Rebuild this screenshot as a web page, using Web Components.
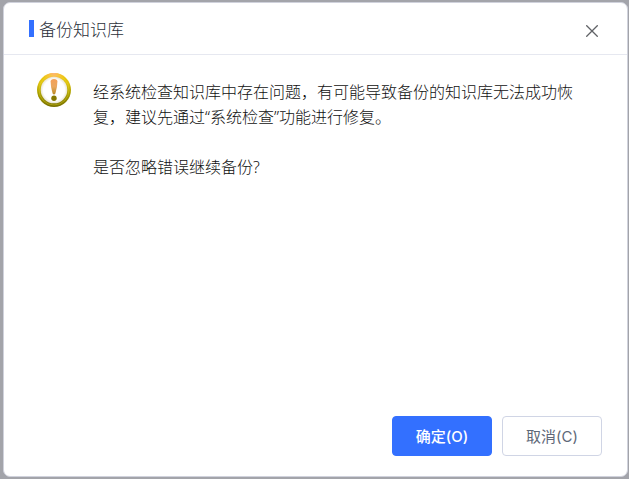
<!DOCTYPE html>
<html lang="zh-CN">
<head>
<meta charset="utf-8">
<title>备份知识库</title>
<style>
  html, body {
    height: 100%;
    margin: 0;
  }

  body {
    box-sizing: border-box;
    display: flex;
    padding: 2px 1px 2px 3px;
    background: #a3a4aa;
    font-family: "Noto Sans", "Noto Sans CJK SC", sans-serif;
  }
</style>
</head>
<body>
<confirm-dialog>
  <span slot="title">备份知识库</span>
  <warning-icon slot="icon"></warning-icon>
  <p>经系统检查知识库中存在问题，有可能导致备份的知识库无法成功恢复，建议先通过“系统检查”功能进行修复。</p>
  <p>是否忽略错误继续备份?</p>
  <dialog-button slot="actions" primary>确定(O)</dialog-button>
  <dialog-button slot="actions">取消(C)</dialog-button>
</confirm-dialog>

<script>
/**
 * Round gold warning sign
 * @extends HTMLElement
 */
class WarningIcon extends HTMLElement {
  constructor () {
    super();
    const shadow = this.attachShadow({ mode: 'open' });
    shadow.innerHTML =
    `
    <style>
      :host {
        display: block;
        flex: none;
      }

      svg {
        display: block;
      }
    </style>
    <svg width="34" height="34" viewBox="0 0 34 34" aria-hidden="true">
      <defs>
        <linearGradient id="ring" x1="0" y1="0" x2="0" y2="1">
          <stop offset="0" stop-color="#f0cc00"/>
          <stop offset="0.3" stop-color="#dcc010"/>
          <stop offset="0.6" stop-color="#a89e00"/>
          <stop offset="1" stop-color="#787000"/>
        </linearGradient>
        <radialGradient id="shine" cx="0.5" cy="0" r="0.4">
          <stop offset="0" stop-color="#ffb080"/>
          <stop offset="1" stop-color="#ffc040" stop-opacity="0"/>
        </radialGradient>
        <radialGradient id="face">
          <stop offset="0.8" stop-color="#ffffff"/>
          <stop offset="1" stop-color="#e8e4d0"/>
        </radialGradient>
        <linearGradient id="mark" x1="0" y1="0" x2="0" y2="1">
          <stop offset="0" stop-color="#f4a058"/>
          <stop offset="0.5" stop-color="#eaa860"/>
          <stop offset="1" stop-color="#b88820"/>
        </linearGradient>
      </defs>
      <circle cx="17" cy="17" r="17" fill="url(#ring)"/>
      <circle cx="17" cy="17" r="17" fill="url(#shine)"/>
      <circle cx="17" cy="17" r="15" fill="none" stroke="#f4e430" stroke-opacity="0.35"/>
      <circle cx="17" cy="17" r="13.3" fill="url(#face)"/>
      <path d="M13.6 8.5Q13.6 6 17 6T20.4 8.5Q20.4 14 18.4 20.5Q17 22.6 15.6 20.5Q13.6 14 13.6 8.5Z" fill="url(#mark)"/>
      <circle cx="17" cy="25.3" r="2.7" fill="#857800"/>
    </svg>
    `;
  }
}

/**
 * Footer button, filled when it has the "primary" attribute
 * @extends HTMLElement
 */
class DialogButton extends HTMLElement {
  constructor () {
    super();
    const shadow = this.attachShadow({ mode: 'open' });
    shadow.innerHTML =
    `
    <style>
      :host {
        display: block;
      }

      button {
        box-sizing: border-box;
        display: block;
        min-width: 100px;
        height: 40px;
        padding: 0 20px 2px;
        border: 1px solid #d0d5e5;
        border-radius: 4px;
        background: #ffffff;
        color: #606878;
        font-family: Inter, "Noto Sans CJK SC", sans-serif;
        font-size: 15px;
        cursor: pointer;
      }

      :host([primary]) button {
        border-color: #3370ff;
        background: #3370ff;
        color: #ffffff;
        font-weight: 500;
      }
    </style>
    <button type="button"><slot></slot></button>
    `;
  }
}

/**
 * Dialog with a title bar, an icon beside the message and a row of buttons
 * @extends HTMLElement
 */
class ConfirmDialog extends HTMLElement {
  constructor () {
    super();
    const shadow = this.attachShadow({ mode: 'open' });
    shadow.innerHTML =
    `
    <style>
      :host {
        box-sizing: border-box;
        flex: 1;
        display: flex;
        flex-direction: column;
        border: 1px solid #d0d2dc;
        border-radius: 7px;
        background: #ffffff;
      }

      header {
        display: flex;
        align-items: center;
        justify-content: space-between;
        height: 51px;
        padding: 0 29px 0 25px;
        border-bottom: 1px solid #e6e8f0;
      }

      h1 {
        display: flex;
        align-items: center;
        gap: 5px;
        margin: 0;
        color: #2b2f3a;
        font-size: 17px;
        font-weight: 300;
      }

      h1::before {
        content: "";
        width: 5px;
        height: 17px;
        background: #3370ff;
      }

      .close {
        display: block;
        padding: 0;
        margin-top: 5px;
        border: 0;
        background: none;
        color: #606266;
        cursor: pointer;
      }

      .close svg {
        display: block;
      }

      main {
        flex: 1;
        display: flex;
        gap: 22px;
        padding: 18px 40px 0 33px;
      }

      .message {
        flex: 1;
        padding-top: 7px;
        color: #101010;
        font-size: 16px;
        font-weight: 300;
        line-height: 25px;
      }

      ::slotted(p) {
        margin: 0 0 25px;
      }

      footer {
        display: flex;
        justify-content: flex-end;
        gap: 10px;
        padding: 20px 25px;
      }
    </style>
    <header>
      <h1><slot name="title"></slot></h1>
      <button class="close" type="button" aria-label="关闭">
        <svg width="12" height="12" viewBox="0 0 12 12" fill="none" stroke="currentColor" stroke-width="1.3">
          <path d="M0.3 0.3L11.7 11.7M11.7 0.3L0.3 11.7"/>
        </svg>
      </button>
    </header>
    <main>
      <slot name="icon"></slot>
      <div class="message"><slot></slot></div>
    </main>
    <footer><slot name="actions"></slot></footer>
    `;
  }
}

customElements.define('warning-icon', WarningIcon);
customElements.define('dialog-button', DialogButton);
customElements.define('confirm-dialog', ConfirmDialog);
</script>
</body>
</html>
